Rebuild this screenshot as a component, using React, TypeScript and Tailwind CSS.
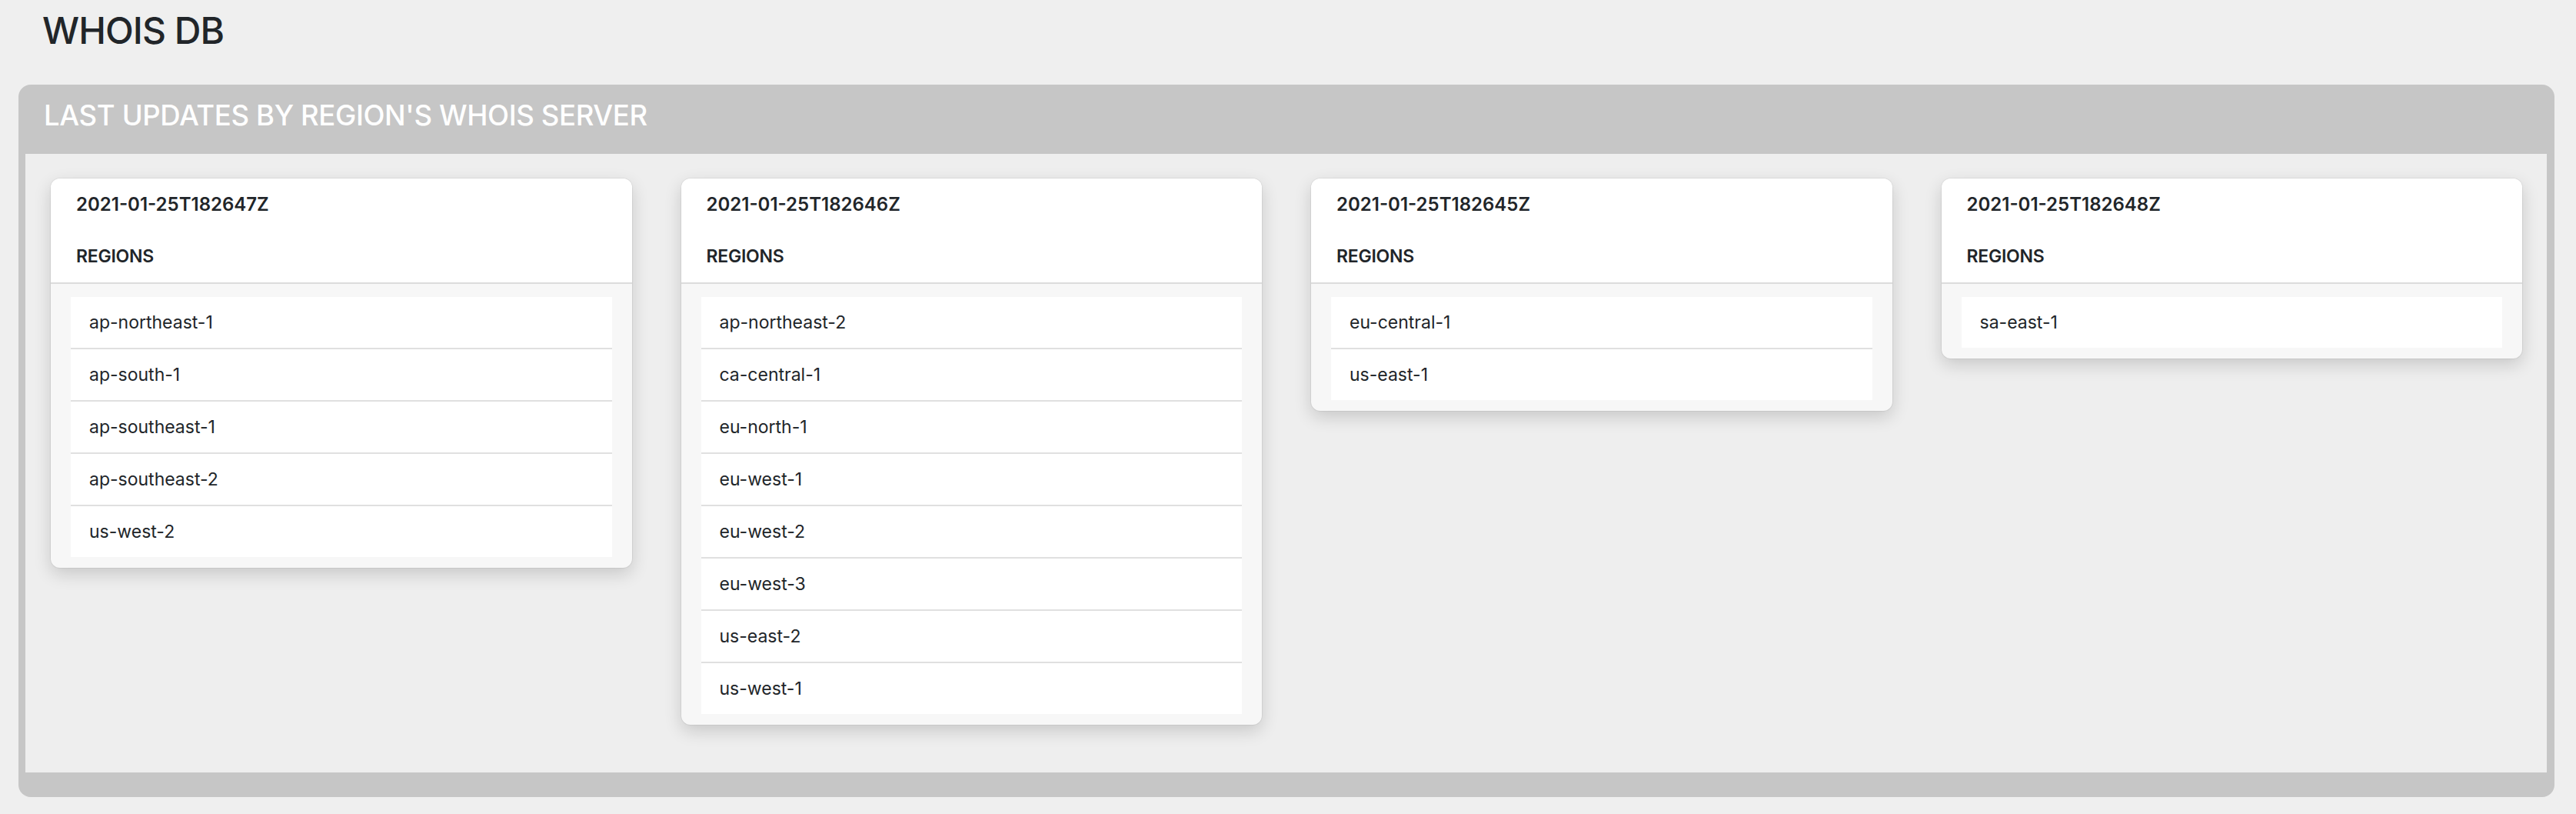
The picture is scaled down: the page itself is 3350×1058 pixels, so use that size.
const servers = [
  {
    ts: '2021-01-25T182647Z',
    regions: ['ap-northeast-1', 'ap-south-1', 'ap-southeast-1', 'ap-southeast-2', 'us-west-2'],
  },
  {
    ts: '2021-01-25T182646Z',
    regions: [
      'ap-northeast-2',
      'ca-central-1',
      'eu-north-1',
      'eu-west-1',
      'eu-west-2',
      'eu-west-3',
      'us-east-2',
      'us-west-1',
    ],
  },
  { ts: '2021-01-25T182645Z', regions: ['eu-central-1', 'us-east-1'] },
  { ts: '2021-01-25T182648Z', regions: ['sa-east-1'] },
];

function ServerCard({ ts, regions }: { ts: string; regions: string[] }) {
  return (
    <div className="overflow-hidden rounded-xl bg-[#f7f7f7] shadow-[0_8px_22px_rgba(0,0,0,0.16)] ring-1 ring-black/5">
      <div className="border-b-2 border-[#dcdcdc] bg-white px-[33px] pt-[15px] pb-[17px]">
        <div className="text-[24px] leading-[38px] font-semibold">{ts}</div>
        <div className="mt-[31px] text-[23px] leading-[34px] font-semibold tracking-[-0.01em]">REGIONS</div>
      </div>
      <ul className="divide-y-2 divide-[#e0e0e0] px-[26px] pt-[17px] pb-[14px]">
        {regions.map((r) => (
          <li key={r} className="bg-white px-[24px] py-[14px] text-[23px] leading-[38px]">
            {r}
          </li>
        ))}
      </ul>
    </div>
  );
}

export default function App() {
  return (
    <div className="min-h-screen bg-[#efefef] font-['Inter','Liberation_Sans',Arial,sans-serif] text-[#212529]">
      <h1 className="h-[110px] pl-[55px] pt-[12px] text-[48px] leading-[55px] font-medium tracking-[-0.02em]">
        WHOIS DB
      </h1>
      <section className="ml-[24px] mr-[28px] rounded-[16px] bg-[#c6c6c6] pl-[9px] pr-[10px] pb-[32px]">
        <h2 className="h-[90px] pl-[24px] pt-[19px] text-[36.5px] leading-[42px] font-medium tracking-[-0.01em] text-white">
          LAST UPDATES BY REGION'S WHOIS SERVER
        </h2>
        <div className="grid h-[804px] grid-cols-4 items-start gap-16 bg-[#eeeeee] pt-8 pl-[33px] pr-[32px]">
          {servers.map((s) => (
            <ServerCard key={s.ts} ts={s.ts} regions={s.regions} />
          ))}
        </div>
      </section>
    </div>
  );
}
